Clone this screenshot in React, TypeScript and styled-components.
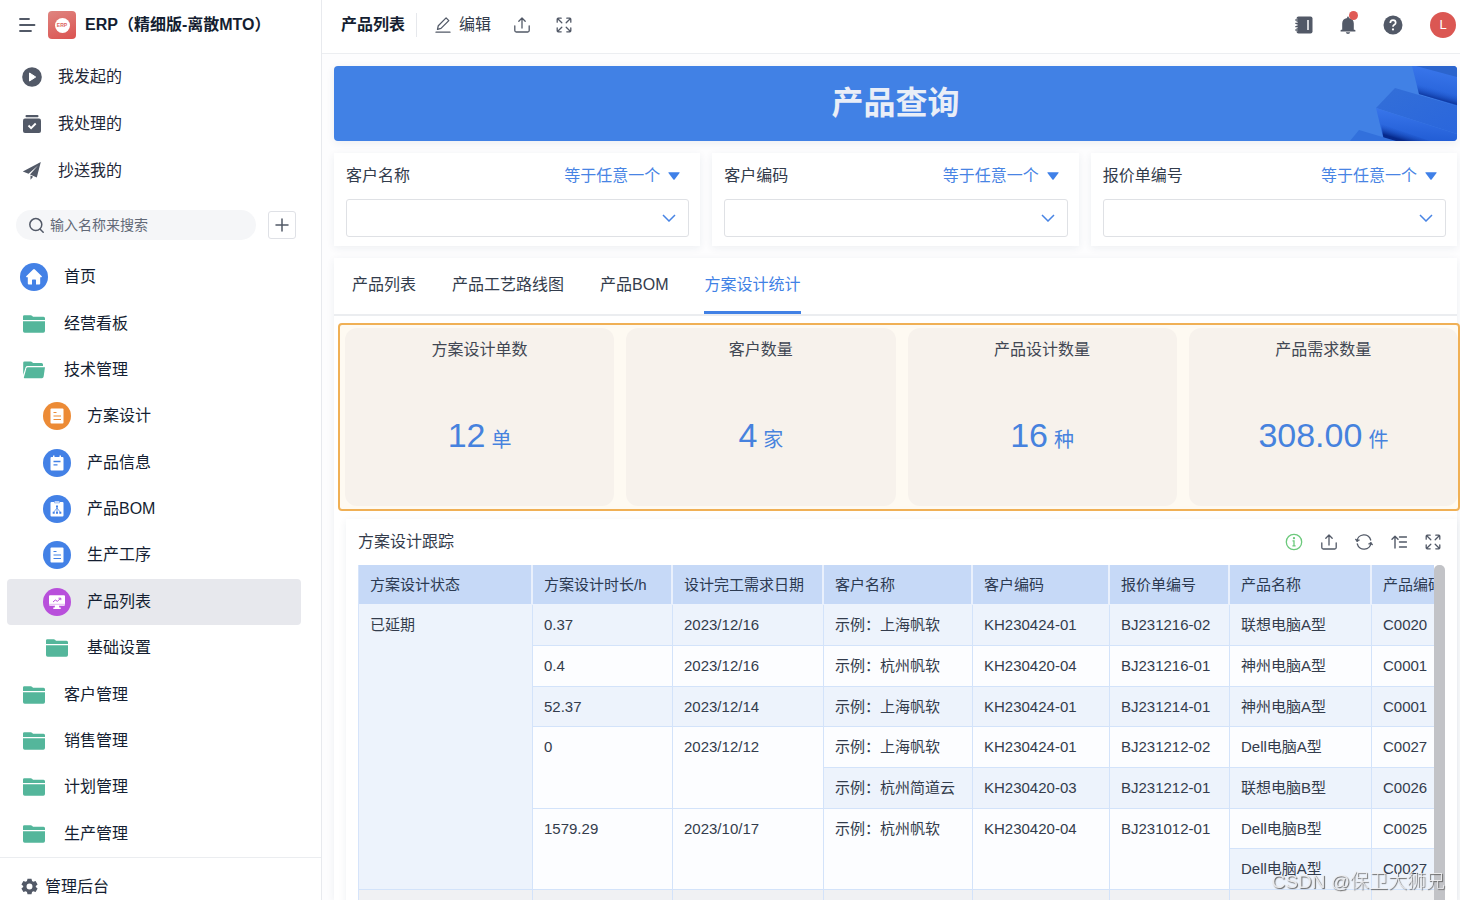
import React from "react";
import styled, { createGlobalStyle, css } from "styled-components";

const GlobalStyle = createGlobalStyle`
  *, *::before, *::after { box-sizing: border-box; }
  body {
    margin: 0;
    background: #fdfdfe;
    color: #141e31;
    font: 16px/24px "Liberation Sans", "Noto Sans CJK SC", sans-serif;
  }
  button, input, select { font: inherit; color: inherit; }
  button { padding: 0; border: 0; background: none; cursor: pointer; }
  a { color: inherit; text-decoration: none; }
  h1, h2, h3, p, dl, dd, dt, ul { margin: 0; padding: 0; }
  svg { display: block; flex: none; }
`;

const Page = styled.div`
  display: flex;
  height: 100vh;
  overflow: hidden;
`;

/* ---------- Sidebar ---------- */

const Sidebar = styled.aside`
  display: flex;
  flex: none;
  flex-direction: column;
  width: 322px;
  border-right: 1px solid #e8eaee;
  background: #fff;
`;

const Brand = styled.header`
  display: flex;
  align-items: center;
  height: 50px;
  padding-left: 18px;
  gap: 9px;
`;

const IconButton = styled.button`
  display: flex;
  align-items: center;
  justify-content: center;
  color: #525967;
`;

const BrandLogo = styled.span`
  display: flex;
  align-items: center;
  justify-content: center;
  width: 28px;
  height: 28px;
  margin-left: 3px;
  border-radius: 4px;
  background: linear-gradient(160deg, #df8580, #db5250);
`;

const BrandMark = styled.span`
  display: flex;
  align-items: center;
  justify-content: center;
  width: 15px;
  height: 15px;
  border-radius: 50%;
  background: #fff;
  color: #dd6561;
  font-size: 5px;
  font-weight: 700;
  line-height: 6px;
`;

const BrandName = styled.h1`
  font-size: 16px;
  line-height: 24px;
  font-weight: 700;
  white-space: nowrap;
`;

const QuickNav = styled.nav`
  display: grid;
  grid-auto-rows: 1fr;
  height: 140px;
  margin-top: 4px;
`;

const QuickLink = styled.a`
  display: flex;
  align-items: center;
  gap: 16px;
  padding-left: 22px;
  color: #1f2838;

  svg { color: #525967; }
`;

const SearchRow = styled.form`
  display: flex;
  align-items: center;
  gap: 12px;
  height: 60px;
  padding: 2px 25px 0 16px;
`;

const SearchField = styled.label`
  display: flex;
  flex: 1;
  align-items: center;
  gap: 5px;
  height: 30px;
  padding: 0 12px;
  border-radius: 15px;
  background: #f5f6f8;
  color: #525967;
`;

const SearchInput = styled.input`
  flex: 1;
  min-width: 0;
  padding: 0;
  border: 0;
  outline: 0;
  background: transparent;
  font-size: 14px;
  line-height: 20px;

  &::placeholder { color: #626977; opacity: 1; }
`;

const AddButton = styled(IconButton)`
  width: 28px;
  height: 28px;
  border: 1px solid #dfe1e6;
  border-radius: 3px;
`;

const Menu = styled.nav`
  display: grid;
  flex: 1;
  grid-auto-rows: minmax(46px, 1fr);
  padding: 0 20px 0 7px;
`;

const MenuLink = styled.a<{ $nested?: boolean; $active?: boolean }>`
  display: flex;
  align-items: center;
  gap: 16px;
  padding-left: ${(p) => (p.$nested ? 36 : 13)}px;
  border-radius: 4px;
  background: ${(p) => (p.$active ? "#e7e8ed" : "transparent")};
`;

const MenuIcon = styled.span<{ $tint?: string }>`
  display: flex;
  flex: none;
  align-items: center;
  justify-content: center;
  width: 28px;
  height: 28px;
  border-radius: 50%;
  background: ${(p) => p.$tint ?? "transparent"};
`;

const AdminLink = styled.a`
  display: flex;
  flex: none;
  align-items: center;
  gap: 7px;
  height: 43px;
  padding: 15px 0 0 21px;
  border-top: 1px solid #ebedf0;

  svg { color: #525967; }
`;

const AdminLabel = styled.span`
  line-height: 28px;
`;

/* ---------- Main ---------- */

const Main = styled.main`
  display: flex;
  flex: 1;
  flex-direction: column;
  min-width: 0;
`;

const TopBar = styled.header`
  display: flex;
  flex: none;
  align-items: center;
  justify-content: space-between;
  height: 54px;
  padding: 0 4px 4px 19px;
  border-bottom: 1px solid #eceef1;
  background: #fff;
`;

const Group = styled.div<{ $gap: number }>`
  display: flex;
  align-items: center;
  gap: ${(p) => p.$gap}px;
`;

const PageTitle = styled.h2`
  padding-right: 11px;
  border-right: 1px solid #e6e8ec;
  font-size: 16px;
  line-height: 24px;
  font-weight: 700;
`;

const EditButton = styled.button`
  display: flex;
  align-items: center;
  gap: 8px;
  margin-right: 5px;
  color: #343c4c;

  svg { color: #525967; }
`;

const Bell = styled(IconButton)`
  position: relative;
`;

const Dot = styled.span`
  position: absolute;
  top: -4px;
  right: 0;
  width: 9px;
  height: 9px;
  border-radius: 50%;
  background: #e05a55;
`;

const Avatar = styled.button`
  width: 26px;
  height: 26px;
  margin-left: 2px;
  border-radius: 50%;
  background: #db5753;
  color: #fff;
  font-size: 13px;
  line-height: 26px;
`;

const Content = styled.div`
  display: flex;
  flex: 1;
  flex-direction: column;
  min-height: 0;
  gap: 12px;
  padding: 12px 0 0 12px;
  overflow: hidden;
`;

const Banner = styled.section`
  position: relative;
  display: flex;
  flex: none;
  align-items: center;
  justify-content: center;
  height: 75px;
  padding-bottom: 2px;
  margin-right: 3px;
  border-radius: 4px;
  overflow: hidden;
  background: #4181e5;
  box-shadow: 0 2px 8px rgba(30, 50, 90, 0.08);
`;

const BannerArt = styled.svg`
  position: absolute;
  top: 0;
  right: 0;
`;

const BannerTitle = styled.h2`
  color: #e9eef7;
  font-size: 32px;
  line-height: 48px;
  font-weight: 700;
`;

const Filters = styled.div`
  display: grid;
  grid-template-columns: repeat(3, 1fr);
  gap: 12px;
  margin-right: 3px;
`;

const card = css`
  background: #fff;
  box-shadow: 0 2px 8px rgba(30, 50, 90, 0.07);
`;

const FilterCard = styled.section`
  ${card}
  padding: 11px 11px 9px 12px;
`;

const FilterHead = styled.div`
  display: flex;
  justify-content: space-between;
  height: 35px;
  padding-right: 9px;
  color: #333c4c;
`;

const MatchButton = styled.button`
  display: flex;
  align-items: center;
  gap: 8px;
  height: 24px;
  color: #4884e4;
`;

const SelectBox = styled.div`
  display: grid;
  align-items: center;

  > * { grid-area: 1 / 1; }
  > svg { justify-self: end; margin-right: 13px; pointer-events: none; }
`;

const Select = styled.select`
  width: 100%;
  height: 38px;
  padding: 0 36px 0 12px;
  border: 1px solid #dfe1e5;
  border-radius: 3px;
  background: #fff;
  appearance: none;
`;

const Panel = styled.section`
  ${card}
  flex: 1;
  min-height: 0;
  margin-right: 3px;
`;

const TabBar = styled.div`
  display: flex;
  gap: 36px;
  height: 58px;
  padding-left: 18px;
  border-bottom: 2px solid #ebedf0;
`;

const Tab = styled.button<{ $active?: boolean }>`
  height: 56px;
  border-bottom: 3px solid ${(p) => (p.$active ? "#4181e5" : "transparent")};
  color: ${(p) => (p.$active ? "#4181e5" : "#333c4c")};
`;

const Stats = styled.div`
  display: grid;
  grid-template-columns: repeat(4, 1fr);
  gap: 12px;
  margin: 7px -3px 0 4px;
  padding: 3px 0 3px 5px;
  border: 2px solid #f0b055;
  border-radius: 4px;
  background: #fefaf2;
`;

const Stat = styled.dl`
  height: 178px;
  padding-top: 10px;
  border-radius: 12px;
  background: #f7f2ec;
  text-align: center;
`;

const StatLabel = styled.dt`
  color: #414753;
`;

const StatValue = styled.dd`
  display: flex;
  align-items: baseline;
  justify-content: center;
  gap: 6px;
  margin-top: 53px;
  color: #4682de;
  font-size: 34px;
  line-height: 40px;
`;

const Unit = styled.span`
  font-size: 20px;
`;

const Detail = styled.section`
  ${card}
  height: 420px;
  margin: 8px 0 0 12px;
  padding: 0 12px;
`;

const DetailHead = styled.header`
  display: flex;
  align-items: center;
  justify-content: space-between;
  height: 46px;
  padding-right: 4px;
`;

const DetailTitle = styled.h3`
  color: #333c4c;
  font-size: 16px;
  line-height: 24px;
  font-weight: 400;
`;

const TableArea = styled.div`
  display: flex;
`;

const TableClip = styled.div`
  flex: 1;
  min-width: 0;
  overflow: hidden;
`;

const Scrollbar = styled.div`
  flex: none;
  width: 11px;
  border-radius: 5px 5px 0 0;
  background: #c2c3c7;
`;

const Table = styled.table`
  width: 1132px;
  table-layout: fixed;
  border-collapse: separate;
  border-spacing: 0;
  border-left: 1px solid #d6e4fa;
  font-size: 15px;
  line-height: 20px;
  color: #333c4c;
`;

const Th = styled.th<{ $width: number }>`
  width: ${(p) => p.$width}px;
  height: 40px;
  padding: 0 11px;
  border-right: 2px solid #e9f0fc;
  border-bottom: 1px solid #edf3fd;
  background: #c6d9f7;
  color: #2c3a52;
  font-weight: 400;
  text-align: left;
  white-space: nowrap;
`;

const Row = styled.tr`
  height: 41px;
  &:nth-child(3n) { height: 40px; }
`;

const Td = styled.td<{ $tone: "blue" | "white" | "grey" }>`
  padding: 10px 11px 0;
  border-right: 1px solid #d3e3fa;
  border-bottom: 1px solid #d3e3fa;
  background: ${(p) => ({ blue: "#edf3fc", white: "#fcfdff", grey: "#f0f1f3" })[p.$tone]};
  vertical-align: top;
  white-space: nowrap;
`;

const Watermark = styled.p`
  position: fixed;
  right: 15px;
  bottom: 5px;
  color: rgba(240, 240, 242, 0.9);
  font-size: 19px;
  line-height: 26px;
  font-weight: 300;
  text-shadow: 1px 1px 1px #666;
  pointer-events: none;
`;

/* ---------- Icons ---------- */

const line = {
  fill: "none",
  stroke: "currentColor",
  strokeLinecap: "round" as const,
  strokeLinejoin: "round" as const,
};

const MenuLines = () => (
  <svg width="18" height="18" viewBox="0 0 18 18" {...line} strokeWidth="1.8">
    <path d="M2 3h9M2 9h14.500M2 15h11" />
  </svg>
);

const PlayCircle = () => (
  <svg width="20" height="20" viewBox="0 0 20 20">
    <circle cx="10" cy="10" r="9.800" fill="currentColor" />
    <path d="M7.500 6v8l6.200-4z" fill="#fff" stroke="#fff" strokeLinejoin="round" />
  </svg>
);

const TaskDone = () => (
  <svg width="20" height="20" viewBox="0 0 20 20">
    <rect x="3.500" y="1" width="13" height="2.200" rx="1" fill="currentColor" />
    <rect x="1" y="4.500" width="18" height="14.500" rx="2" fill="currentColor" />
    <path d="M6.500 11.500l2.600 2.600 4.600-4.600" fill="none" stroke="#fff" strokeWidth="1.900" />
  </svg>
);

const Plane = () => (
  <svg width="20" height="20" viewBox="0 0 20 20" fill="currentColor">
    <path d="M18.800 1L.8 10.600l5.700 2.200L16 4.600 8 13.400l6.800 3zM8.500 14.600v4.200l2.600-3z" />
  </svg>
);

const Magnifier = () => (
  <svg width="17" height="17" viewBox="0 0 17 17" {...line} strokeWidth="1.500">
    <circle cx="7.800" cy="7.600" r="6" />
    <path d="M12.200 12.200l3 3" />
  </svg>
);

const Plus = () => (
  <svg width="14" height="14" viewBox="0 0 14 14" {...line} strokeWidth="1.500">
    <path d="M7 1v12M1 7h12" />
  </svg>
);

const Folder = () => (
  <svg width="22" height="18" viewBox="0 0 22 18" fill="#54b69b">
    <path d="M0 5V1.500Q0 .2 1.300.2H7.800Q8.500.2 9 .8L10 1.800H20.500Q22 1.800 22 3.300V5z" />
    <path d="M0 6.200H22V16Q22 17.800 20.300 17.800H1.700Q0 17.800 0 16z" />
  </svg>
);

const FolderOpen = () => (
  <svg width="22" height="18" viewBox="0 0 22 18" fill="#54b69b">
    <path d="M.2 14V1.800Q.2.500 1.500.500H7.800Q8.500.500 9 1L10 2H18.500Q20 2 20 3.500V5H4.500Q3 5 2.600 6.200z" />
    <path d="M4.800 6.300H22L20.600 15.800Q20.300 17.200 19 17.200H1.500Q.7 17.200.9 16.300L3.400 7.300Q3.700 6.300 4.800 6.300z" />
  </svg>
);

const Home = () => (
  <svg width="18" height="18" viewBox="0 0 18 18" fill="#fff">
    <path d="M9 1Q9.500 1 9.900 1.400L16.800 8.200Q17.200 9 16.300 9.200H15.200V15.500Q15.200 16.600 14.200 16.600H11V12.200Q11 11.500 10.300 11.500H7.700Q7 11.500 7 12.200V16.600H3.800Q2.800 16.600 2.800 15.500V9.200H1.700Q.8 9 1.200 8.200L8.100 1.400Q8.500 1 9 1z" />
  </svg>
);

const Doc = ({ tint }: { tint: string }) => (
  <svg width="16" height="16" viewBox="0 0 16 16">
    <rect x="1.500" y=".5" width="13" height="15" rx="1" fill="#fff" />
    <path d="M4.500 4.500h3M4.500 8h7.500M4.500 11.500h7.500" stroke={tint} strokeWidth="1.200" />
  </svg>
);

const Note = ({ tint }: { tint: string }) => (
  <svg width="16" height="16" viewBox="0 0 16 16">
    <path d="M2.500 2H4V.5h1.500V2h5V.5H12V2h1.500q1 0 1 1v11.500q0 1-1 1h-11q-1 0-1-1V3q0-1 1-1z" fill="#fff" />
    <path d="M4.500 6.500h7M4.500 9.800h4" stroke={tint} strokeWidth="1.300" />
  </svg>
);

const Clipboard = ({ tint }: { tint: string }) => (
  <svg width="16" height="16" viewBox="0 0 16 16">
    <rect x="1.500" y="1" width="13" height="14.500" rx="1" fill="#fff" />
    <path d="M5.500 0h5v2h-5z" fill="#dbe7fb" stroke={tint} strokeWidth=".4" />
    <path d="M8 5v6M8 7l-3.300 4.200M8 7l3.300 4.200" stroke={tint} strokeWidth=".7" fill="none" />
    <path d="M3.700 10.800h2v2h-2zM7 10.800h2v2H7zM10.300 10.800h2v2h-2zM7 4.500h2v2H7z" fill={tint} />
  </svg>
);

const Monitor = ({ tint }: { tint: string }) => (
  <svg width="16" height="14" viewBox="0 0 16 14">
    <path d="M1 .2h14q1 0 1 1v8.600q0 1-1 1h-5l.4 1.700h1.300V14H4.300v-1.500h1.300L6 10.800H1q-1 0-1-1V1.200q0-1 1-1z" fill="#fff" />
    <path d="M0 9.300h16" stroke={tint} strokeWidth=".4" />
    <path d="M4 7l2.300-2 2 1.300 3.200-2.800M9.500 3.200h2.300v2" fill="none" stroke={tint} />
  </svg>
);

const Gear = () => (
  <svg width="17" height="17" viewBox="0 0 24 24">
    <path
      fill="currentColor"
      fillRule="evenodd"
      d="M9.200 1h5.600l.8 3.300 1.700 1 3.300-1 2.800 4.800-2.500 2.300v1.200l2.500 2.300-2.800 4.800-3.300-1-1.700 1-.8 3.300H9.200l-.8-3.300-1.700-1-3.300 1L.6 14.900l2.500-2.300v-1.200L.6 9.100l2.800-4.800 3.300 1 1.700-1zM12 7.800a4.200 4.200 0 1 0 0 8.400 4.200 4.200 0 0 0 0-8.400z"
    />
  </svg>
);

const Pencil = () => (
  <svg width="16" height="16" viewBox="0 0 16 16" {...line} strokeWidth="1.300">
    <path d="M1 15.200h14M2.500 12.300l.8-3.600 7.800-7.800 2.700 2.700-7.800 7.800z" />
  </svg>
);

const Upload = () => (
  <svg width="16" height="16" viewBox="0 0 16 16" {...line} strokeWidth="1.300">
    <path d="M8 11V1.200M4.800 4.200L8 1l3.200 3.200M.8 8.800v4.700q0 1.500 1.500 1.500h11.400q1.500 0 1.500-1.500V8.800" />
  </svg>
);

const Expand = () => (
  <svg width="16" height="16" viewBox="0 0 16 16" {...line} strokeWidth="1.300">
    <path d="M1.200 5.200V2.200q0-1 1-1h3M10.800 1.200h3q1 0 1 1v3M14.800 10.800v3q0 1-1 1h-3M5.200 14.800h-3q-1 0-1-1v-3M2 2l3.800 3.800M14 2l-3.800 3.800M14 14l-3.800-3.800M2 14l3.800-3.800" />
  </svg>
);

const Contacts = () => (
  <svg width="18" height="18" viewBox="0 0 18 18">
    <rect x="1.500" y=".5" width="16" height="17" rx="2" fill="currentColor" />
    <path d="M13 4v10" stroke="#fff" strokeWidth="1.500" />
    <path d="M0 4h2.700M0 7.300h2.700M0 10.700h2.700M0 14h2.700" stroke="#fff" strokeWidth="2.400" />
    <path d="M.3 4h2.700M.3 7.300h2.700M.3 10.700h2.700M.3 14h2.700" stroke="currentColor" strokeWidth="1.300" />
  </svg>
);

const BellIcon = () => (
  <svg width="20" height="20" viewBox="0 0 20 20" fill="currentColor">
    <path d="M10 1.500q.9 0 .9.900v.5q4.900.8 4.900 5.600v6.300h.8q.8 0 .8.800v1H2.600v-1q0-.8.800-.8h.8V8.500q0-4.800 4.900-5.600v-.5q0-.9.9-.9zM7.800 17.300h4.400q-.3 1.700-2.200 1.700t-2.200-1.700z" />
  </svg>
);

const Help = () => (
  <svg width="20" height="20" viewBox="0 0 20 20">
    <circle cx="10" cy="10" r="9.500" fill="currentColor" />
    <path d="M7.300 8q0-2.800 2.700-2.800T12.700 7.700q0 1.200-1.400 2T10 11.800" fill="none" stroke="#fff" strokeWidth="1.700" />
    <circle cx="10" cy="14.400" r="1.100" fill="#fff" />
  </svg>
);

const Caret = () => (
  <svg width="12" height="8" viewBox="0 0 12 8" fill="#3f80e8">
    <path d="M.8.200h10.400q.8.200.3.900L6.600 7.400q-.6.600-1.200 0L.5 1.100Q0 .4.800.2z" />
  </svg>
);

const Chevron = () => (
  <svg width="14" height="8" viewBox="0 0 14 8" fill="none" stroke="#4884e4" strokeWidth="1.500">
    <path d="M1 1l6 6 6-6" />
  </svg>
);

const Info = () => (
  <svg width="18" height="18" viewBox="0 0 18 18" fill="none" stroke="#6cc97c" strokeWidth="1.300">
    <circle cx="9" cy="9" r="7.700" />
    <path d="M7.500 7.800H9v5M7.400 12.800h3.200" />
    <circle cx="9" cy="5.200" r=".5" />
  </svg>
);

const Refresh = () => (
  <svg width="18" height="16" viewBox="0 0 18 16" {...line} strokeWidth="1.300">
    <path d="M2 7a7 7 0 0 1 13.700-1M16 9a7 7 0 0 1-13.700 1" />
    <path d="M.5 5.500L2 7.600l2.200-1.300zM17.500 10.500L16 8.400l-2.200 1.300z" fill="currentColor" strokeWidth=".8" />
  </svg>
);

const Sort = () => (
  <svg width="16" height="16" viewBox="0 0 16 16" {...line} strokeWidth="1.400">
    <path d="M4 14V2.500M1 5.200L4 2.200l3 3M8.500 3h7M8.500 8h7M8.500 13h7" />
  </svg>
);

const Blocks = () => (
  <BannerArt width="107" height="75" viewBox="0 0 107 75" aria-hidden="true">
    <defs>
      <linearGradient id="front" x1="0" y1="0" x2="-0.150" y2="1">
        <stop offset="0" stopColor="#3875ea" />
        <stop offset="1" stopColor="#1f5ad2" />
      </linearGradient>
      <linearGradient id="top" x1="0" y1="0" x2="1" y2="1">
        <stop offset="0" stopColor="#336fd8" />
        <stop offset="1" stopColor="#2a66dc" />
      </linearGradient>
      <linearGradient id="edge" gradientUnits="userSpaceOnUse" x1="90" y1="24" x2="87" y2="35">
        <stop offset="0" stopColor="#1f5ad2" stopOpacity="0" />
        <stop offset="1" stopColor="#06298b" />
      </linearGradient>
      <linearGradient id="edgeLow" gradientUnits="userSpaceOnUse" x1="48" y1="62" x2="45" y2="72">
        <stop offset="0" stopColor="#1f5ad2" stopOpacity="0" />
        <stop offset="1" stopColor="#06298b" />
      </linearGradient>
    </defs>
    <path d="M62 0h45v40L69 28z" fill="url(#front)" />
    <path d="M66 16L107 28v11L69 28z" fill="url(#edge)" />
    <path d="M66 0h41v11z" fill="#2b64cd" />
    <path d="M26 42L45 22 107 40v28z" fill="url(#top)" />
    <path d="M26 42L107 68v7H34z" fill="url(#front)" />
    <path d="M31 58L80 75H34z" fill="url(#edgeLow)" />
    <path d="M0 75L9 64 46 75z" fill="#3270dc" />
  </BannerArt>
);

/* ---------- Data ---------- */

const BLUE = "#4381e6";
const ORANGE = "#ec8b36";
const PURPLE = "#b84fdb";

const menu = [
  { label: "首页", tint: BLUE, icon: <Home /> },
  { label: "经营看板", icon: <Folder /> },
  { label: "技术管理", icon: <FolderOpen /> },
  { label: "方案设计", nested: true, tint: ORANGE, icon: <Doc tint={ORANGE} /> },
  { label: "产品信息", nested: true, tint: BLUE, icon: <Note tint={BLUE} /> },
  { label: "产品BOM", nested: true, tint: BLUE, icon: <Clipboard tint={BLUE} /> },
  { label: "生产工序", nested: true, tint: BLUE, icon: <Doc tint={BLUE} /> },
  { label: "产品列表", nested: true, active: true, tint: PURPLE, icon: <Monitor tint={PURPLE} /> },
  { label: "基础设置", nested: true, icon: <Folder /> },
  { label: "客户管理", icon: <Folder /> },
  { label: "销售管理", icon: <Folder /> },
  { label: "计划管理", icon: <Folder /> },
  { label: "生产管理", icon: <Folder /> },
];

const filters = ["客户名称", "客户编码", "报价单编号"];
const tabs = ["产品列表", "产品工艺路线图", "产品BOM", "方案设计统计"];

const stats = [
  ["方案设计单数", "12", "单"],
  ["客户数量", "4", "家"],
  ["产品设计数量", "16", "种"],
  ["产品需求数量", "308.00", "件"],
];

const columns: [string, number][] = [
  ["方案设计状态", 174],
  ["方案设计时长/h", 140],
  ["设计完工需求日期", 151],
  ["客户名称", 149],
  ["客户编码", 137],
  ["报价单编号", 120],
  ["产品名称", 142],
  ["产品编码", 118],
];

type Cell = [text: string, span?: number];

const rows: Cell[][] = [
  [["已延期", 7], ["0.37"], ["2023/12/16"], ["示例：上海帆软"], ["KH230424-01"], ["BJ231216-02"], ["联想电脑A型"], ["C0020"]],
  [["0.4"], ["2023/12/16"], ["示例：杭州帆软"], ["KH230420-04"], ["BJ231216-01"], ["神州电脑A型"], ["C0001"]],
  [["52.37"], ["2023/12/14"], ["示例：上海帆软"], ["KH230424-01"], ["BJ231214-01"], ["神州电脑A型"], ["C0001"]],
  [["0", 2], ["2023/12/12", 2], ["示例：上海帆软"], ["KH230424-01"], ["BJ231212-02"], ["Dell电脑A型"], ["C0027"]],
  [["示例：杭州简道云"], ["KH230420-03"], ["BJ231212-01"], ["联想电脑B型"], ["C0026"]],
  [["1579.29", 2], ["2023/10/17", 2], ["示例：杭州帆软", 2], ["KH230420-04", 2], ["BJ231012-01", 2], ["Dell电脑B型"], ["C0025"]],
  [["Dell电脑A型"], ["C0027"]],
];

/* ---------- Page ---------- */

export default function App() {
  return (
    <Page>
      <GlobalStyle />
      <Sidebar>
        <Brand>
          <IconButton aria-label="收起菜单"><MenuLines /></IconButton>
          <BrandLogo><BrandMark>ERP</BrandMark></BrandLogo>
          <BrandName>ERP（精细版-离散MTO）</BrandName>
        </Brand>
        <QuickNav>
          <QuickLink href="#started"><PlayCircle />我发起的</QuickLink>
          <QuickLink href="#handled"><TaskDone />我处理的</QuickLink>
          <QuickLink href="#copied"><Plane />抄送我的</QuickLink>
        </QuickNav>
        <SearchRow onSubmit={(e) => e.preventDefault()}>
          <SearchField>
            <Magnifier />
            <SearchInput type="search" aria-label="搜索" placeholder="输入名称来搜索" />
          </SearchField>
          <AddButton type="button" aria-label="新建"><Plus /></AddButton>
        </SearchRow>
        <Menu>
          {menu.map((m) => (
            <MenuLink key={m.label} href={`#${m.label}`} $nested={m.nested} $active={m.active}>
              <MenuIcon $tint={m.tint}>{m.icon}</MenuIcon>
              {m.label}
            </MenuLink>
          ))}
        </Menu>
        <AdminLink href="#admin"><Gear /><AdminLabel>管理后台</AdminLabel></AdminLink>
      </Sidebar>

      <Main>
        <TopBar>
          <Group $gap={18}>
            <PageTitle>产品列表</PageTitle>
            <EditButton><Pencil />编辑</EditButton>
            <Group $gap={26}>
              <IconButton aria-label="导出"><Upload /></IconButton>
              <IconButton aria-label="全屏"><Expand /></IconButton>
            </Group>
          </Group>
          <Group $gap={25}>
            <IconButton aria-label="通讯录"><Contacts /></IconButton>
            <Bell aria-label="消息"><BellIcon /><Dot /></Bell>
            <IconButton aria-label="帮助"><Help /></IconButton>
            <Avatar>L</Avatar>
          </Group>
        </TopBar>

        <Content>
          <Banner>
            <Blocks />
            <BannerTitle>产品查询</BannerTitle>
          </Banner>

          <Filters>
            {filters.map((name, i) => (
              <FilterCard key={name}>
                <FilterHead>
                  <label htmlFor={`filter-${i}`}>{name}</label>
                  <MatchButton>等于任意一个<Caret /></MatchButton>
                </FilterHead>
                <SelectBox>
                  <Select id={`filter-${i}`}><option value="" /></Select>
                  <Chevron />
                </SelectBox>
              </FilterCard>
            ))}
          </Filters>

          <Panel>
            <TabBar role="tablist">
              {tabs.map((name, i) => (
                <Tab key={name} role="tab" aria-selected={i === 3} $active={i === 3}>{name}</Tab>
              ))}
            </TabBar>

            <Stats>
              {stats.map(([label, value, unit]) => (
                <Stat key={label}>
                  <StatLabel>{label}</StatLabel>
                  <StatValue>{value}<Unit>{unit}</Unit></StatValue>
                </Stat>
              ))}
            </Stats>

            <Detail>
              <DetailHead>
                <DetailTitle>方案设计跟踪</DetailTitle>
                <Group $gap={18}>
                  <IconButton aria-label="说明"><Info /></IconButton>
                  <IconButton aria-label="导出"><Upload /></IconButton>
                  <IconButton aria-label="刷新"><Refresh /></IconButton>
                  <IconButton aria-label="排序"><Sort /></IconButton>
                  <IconButton aria-label="全屏"><Expand /></IconButton>
                </Group>
              </DetailHead>
              <TableArea>
                <TableClip>
                  <Table>
                    <thead>
                      <tr>
                        {columns.map(([name, width]) => (
                          <Th key={name} scope="col" $width={width}>{name}</Th>
                        ))}
                      </tr>
                    </thead>
                    <tbody>
                      {rows.map((cells, r) => (
                        <Row key={r}>
                          {cells.map(([text, span], c) => (
                            <Td key={c} rowSpan={span} $tone={r % 2 === 0 ? "blue" : "white"}>{text}</Td>
                          ))}
                        </Row>
                      ))}
                      <Row>
                        {columns.map(([name]) => <Td key={name} $tone="grey" />)}
                      </Row>
                    </tbody>
                  </Table>
                </TableClip>
                <Scrollbar />
              </TableArea>
            </Detail>
          </Panel>
        </Content>
      </Main>
      <Watermark>CSDN @保卫大狮兄</Watermark>
    </Page>
  );
}
